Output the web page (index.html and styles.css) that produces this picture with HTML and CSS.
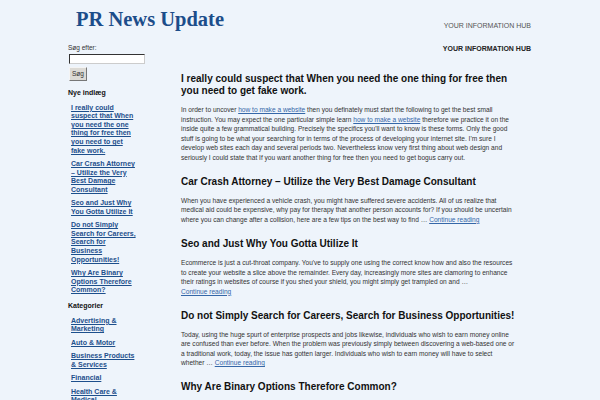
FILE: index.html
```html
<!DOCTYPE html>
<html lang="da">
<head>
<meta charset="utf-8">
<title>PR News Update</title>
<link rel="stylesheet" href="styles.css">
</head>
<body>
<div class="page">
  <header class="header">
    <h1 class="site-title">PR News Update</h1>
    <div class="tagline">YOUR INFORMATION HUB</div>
  </header>
  <div class="layout">
    <aside class="sidebar">
      <form class="search">
        <label class="search-label">Søg efter:</label>
        <input class="search-input" type="text">
        <button class="search-btn" type="button">Søg</button>
      </form>
      <div class="widget">
        <h3 class="widget-title">Nye indlæg</h3>
        <ul class="widget-list">
          <li><a href="#">I really could suspect that When you need the one thing for free then you need to get fake work.</a></li>
          <li><a href="#">Car Crash Attorney – Utilize the Very Best Damage Consultant</a></li>
          <li><a href="#">Seo and Just Why You Gotta Utilize It</a></li>
          <li><a href="#">Do not Simply Search for Careers, Search for Business Opportunities!</a></li>
          <li><a href="#">Why Are Binary Options Therefore Common?</a></li>
        </ul>
      </div>
      <div class="widget">
        <h3 class="widget-title">Kategorier</h3>
        <ul class="widget-list">
          <li><a href="#">Advertising &amp; Marketing</a></li>
          <li><a href="#">Auto &amp; Motor</a></li>
          <li><a href="#">Business Products &amp; Services</a></li>
          <li><a href="#">Financial</a></li>
          <li><a href="#">Health Care &amp; Medical</a></li>
        </ul>
      </div>
    </aside>
    <div class="subtag">YOUR INFORMATION HUB</div>
    <main class="main">
      <article class="post">
        <h2 class="post-title">I really could suspect that When you need the one thing for free then you need to get fake work.</h2>
        <p class="post-text">In order to uncover <a href="#">how to make a website</a> then you definately must start the following to get the best small instruction. You may expect the one particular simple learn <a href="#">how to make a website</a> therefore we practice it on the inside quite a few grammatical building. Precisely the specifics you'll want to know is these forms. Only the good stuff is going to be what your searching for in terms of the process of developing your internet site. I'm sure I develop web sites each day and several periods two. Nevertheless know very first thing about web design and seriously I could state that If you want another thing for free then you need to get bogus carry out.</p>
      </article>
      <article class="post">
        <h2 class="post-title">Car Crash Attorney – Utilize the Very Best Damage Consultant</h2>
        <p class="post-text">When you have experienced a vehicle crash, you might have suffered severe accidents. All of us realize that medical aid could be expensive, why pay for therapy that another person accounts for? If you should be uncertain where you can change after a collision, here are a few tips on the best way to find … <a class="more" href="#">Continue reading</a></p>
      </article>
      <article class="post">
        <h2 class="post-title">Seo and Just Why You Gotta Utilize It</h2>
        <p class="post-text">Ecommerce is just a cut-throat company. You've to supply one using the correct know how and also the resources to create your website a slice above the remainder. Every day, increasingly more sites are clamoring to enhance their ratings in websites of course if you shed your shield, you might simply get trampled on and … <a class="more" href="#">Continue reading</a></p>
      </article>
      <article class="post">
        <h2 class="post-title">Do not Simply Search for Careers, Search for Business Opportunities!</h2>
        <p class="post-text">Today, using the huge spurt of enterprise prospects and jobs likewise, individuals who wish to earn money online are confused than ever before. When the problem was previously simply between discovering a web-based one or a traditional work, today, the issue has gotten larger. Individuals who wish to earn money will have to select whether … <a class="more" href="#">Continue reading</a></p>
      </article>
      <article class="post">
        <h2 class="post-title">Why Are Binary Options Therefore Common?</h2>
        <p class="post-text">Binary options are becoming more popular every day, and traders around the world are turning to them.</p>
      </article>
    </main>
  </div>
</div>
</body>
</html>
```

FILE: styles.css
```css
html, body {
  margin: 0;
  padding: 0;
  background: #eef4fb;
  height: 100%;
  overflow: hidden;
}
body {
  font-family: "Liberation Sans", Arial, sans-serif;
  color: #333;
}
.page {
  margin-left: 68px;
  width: 463px;
}
.header {
  display: flex;
  justify-content: space-between;
  align-items: flex-start;
  height: 44px;
  box-sizing: border-box;
  padding-top: 8px;
}
.site-title {
  margin: 0 0 0 8px;
  font-family: "Liberation Serif", "Times New Roman", serif;
  font-size: 20.5px;
  font-weight: bold;
  line-height: 23.6px;
  color: #1c4d8a;
}
.tagline {
  margin-top: 14px;
  font-size: 7px;
  line-height: 8px;
  color: #555;
}
.layout {
  display: grid;
  grid-template-columns: 113px 350px;
  grid-template-areas:
    "side tag"
    "side main";
  grid-template-rows: auto 1fr;
}
.sidebar {
  grid-area: side;
  width: 80px;
}
.subtag {
  grid-area: tag;
  text-align: right;
  font-size: 7px;
  line-height: 8px;
  font-weight: bold;
  color: #222;
  margin-top: 1.3px;
}
.main {
  grid-area: main;
  padding-top: 19.7px;
  padding-right: 15px;
}
.search {
  display: flex;
  flex-direction: column;
  align-items: flex-start;
}
.search-label {
  font-size: 6.5px;
  line-height: 8px;
  color: #333;
}
.search-input {
  margin: 2px 0 0 1px;
  width: 76px;
  height: 10px;
  box-sizing: border-box;
  padding: 0;
  background: #fff;
  border: 1px solid;
  border-color: #333 #ccc #ccc #333;
}
.search-btn {
  margin: 2.7px 0 0 1px;
  width: 18px;
  height: 14px;
  box-sizing: border-box;
  padding: 0;
  font-family: "Liberation Sans", Arial, sans-serif;
  font-size: 6.5px;
  color: #333;
  background: #dcdad5;
  border: 1px solid;
  border-color: #f4f4f4 #777 #777 #f4f4f4;
}
.widget {
  margin-top: 8px;
}
.widget + .widget {
  margin-top: 7.1px;
}
.widget-title {
  margin: 0 0 6.4px 0;
  font-size: 7px;
  line-height: 8.6px;
  font-weight: bold;
  color: #111;
}
.widget-list {
  list-style: none;
  margin: 0;
  padding: 0 0 0 3px;
  width: 66px;
}
.widget-list li {
  font-size: 7px;
  line-height: 8.6px;
  font-weight: bold;
}
.widget-list li + li {
  margin-top: 4.8px;
}
.widget-list a {
  color: #1d4f8c;
  text-decoration: underline;
}
.post-title {
  margin: 0;
  font-size: 10px;
  line-height: 12px;
  font-weight: bold;
  color: #111;
}
.post-text {
  margin: 8.15px 0 13.6px 0;
  font-size: 6.6px;
  line-height: 9.5px;
  color: #333;
}
.post-text a {
  color: #3567a8;
  text-decoration: underline;
}
.post-text .more {
  white-space: nowrap;
}
```
